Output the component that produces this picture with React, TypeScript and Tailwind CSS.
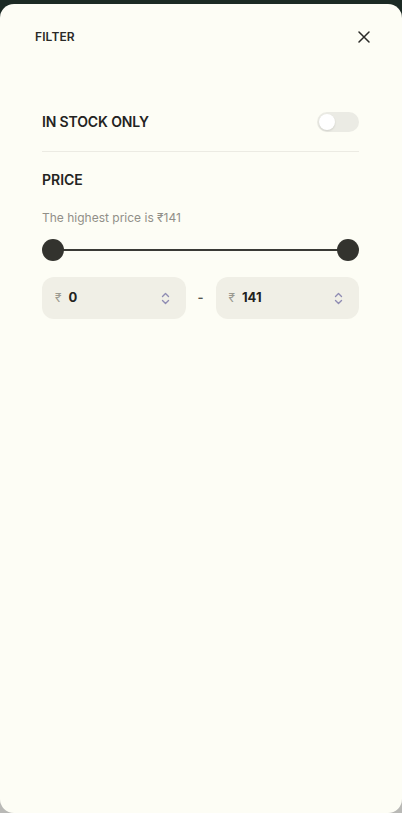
import * as React from 'react';

function Spinner() {
  return (
    <svg width="9" height="13" viewBox="0 0 9 13" fill="none" stroke="#8f8cb3" strokeWidth="1.4" strokeLinecap="round" strokeLinejoin="round">
      <path d="M1.5 4.5 L4.5 1.5 L7.5 4.5" />
      <path d="M1.5 8.5 L4.5 11.5 L7.5 8.5" />
    </svg>
  );
}

function PriceInput({ value }: { value: string }) {
  return (
    <div className="flex h-[42px] flex-1 items-center rounded-[12px] bg-[#f0efe6] pl-[13px] pr-[16px]">
      <span className="text-[12px] text-[#9b9a90]">₹</span>
      <span className="ml-[7px] flex-1 text-[13px] font-bold text-[#222220]">{value}</span>
      <Spinner />
    </div>
  );
}

export default function App() {
  const [inStock, setInStock] = React.useState(false);

  return (
    <div
      className="flex h-[813px] w-[402px] flex-col bg-[linear-gradient(to_bottom,#1c2a24_0,#1c2a24_30px,#b9b9b6_30px)] pt-1"
      style={{ fontFamily: 'Inter, "Noto Sans", sans-serif' }}
    >
      <div className="flex flex-1 flex-col rounded-[14px] bg-[#fdfdf5]">
        <div className="flex items-center justify-between pl-[35px] pr-[30px] pt-[25px]">
          <span className="text-[12px] font-semibold leading-4 tracking-[0.01em] text-[#2a2a27]">FILTER</span>
          <button className="flex h-4 w-4 items-center justify-center text-[#2a2a27]">
            <svg width="12" height="12" viewBox="0 0 12 12" fill="none" stroke="currentColor" strokeWidth="1.5" strokeLinecap="round">
              <path d="M1 1 L11 11 M11 1 L1 11" />
            </svg>
          </button>
        </div>

        <div className="flex flex-col pl-[42px] pr-[43px]">
          <div className="mt-[67px] box-content flex h-5 items-center justify-between border-b border-[#ecebe3] pb-[19px]">
            <span className="text-[14px] font-semibold leading-5 tracking-[-0.01em] text-[#232321]">IN STOCK ONLY</span>
            <button
              onClick={() => setInStock(!inStock)}
              className="flex h-5 w-[42px] items-center rounded-full bg-[#ebebe4] px-[2px]"
            >
              <span className="h-4 w-4 rounded-full bg-white shadow-[0_1px_2px_rgba(0,0,0,0.12)]" />
            </button>
          </div>

          <span className="mt-[18px] text-[14px] font-semibold leading-5 text-[#232321]">PRICE</span>
          <span className="mt-[19px] text-[12px] leading-[18px] text-[#918f88]">The highest price is ₹141</span>

          <div className="relative mt-[12px] flex h-[22px] items-center justify-between">
            <div className="absolute left-[11px] right-[11px] top-[10px] h-[2px] bg-[#3a3a35]" />
            <span className="relative h-[22px] w-[22px] rounded-full bg-[#33332e]" />
            <span className="relative h-[22px] w-[22px] rounded-full bg-[#33332e]" />
          </div>

          <div className="mt-[16px] flex items-center">
            <PriceInput value="0" />
            <span className="w-[30px] text-center text-[13px] font-semibold text-[#55554f]">-</span>
            <PriceInput value="141" />
          </div>
        </div>
      </div>
    </div>
  );
}
